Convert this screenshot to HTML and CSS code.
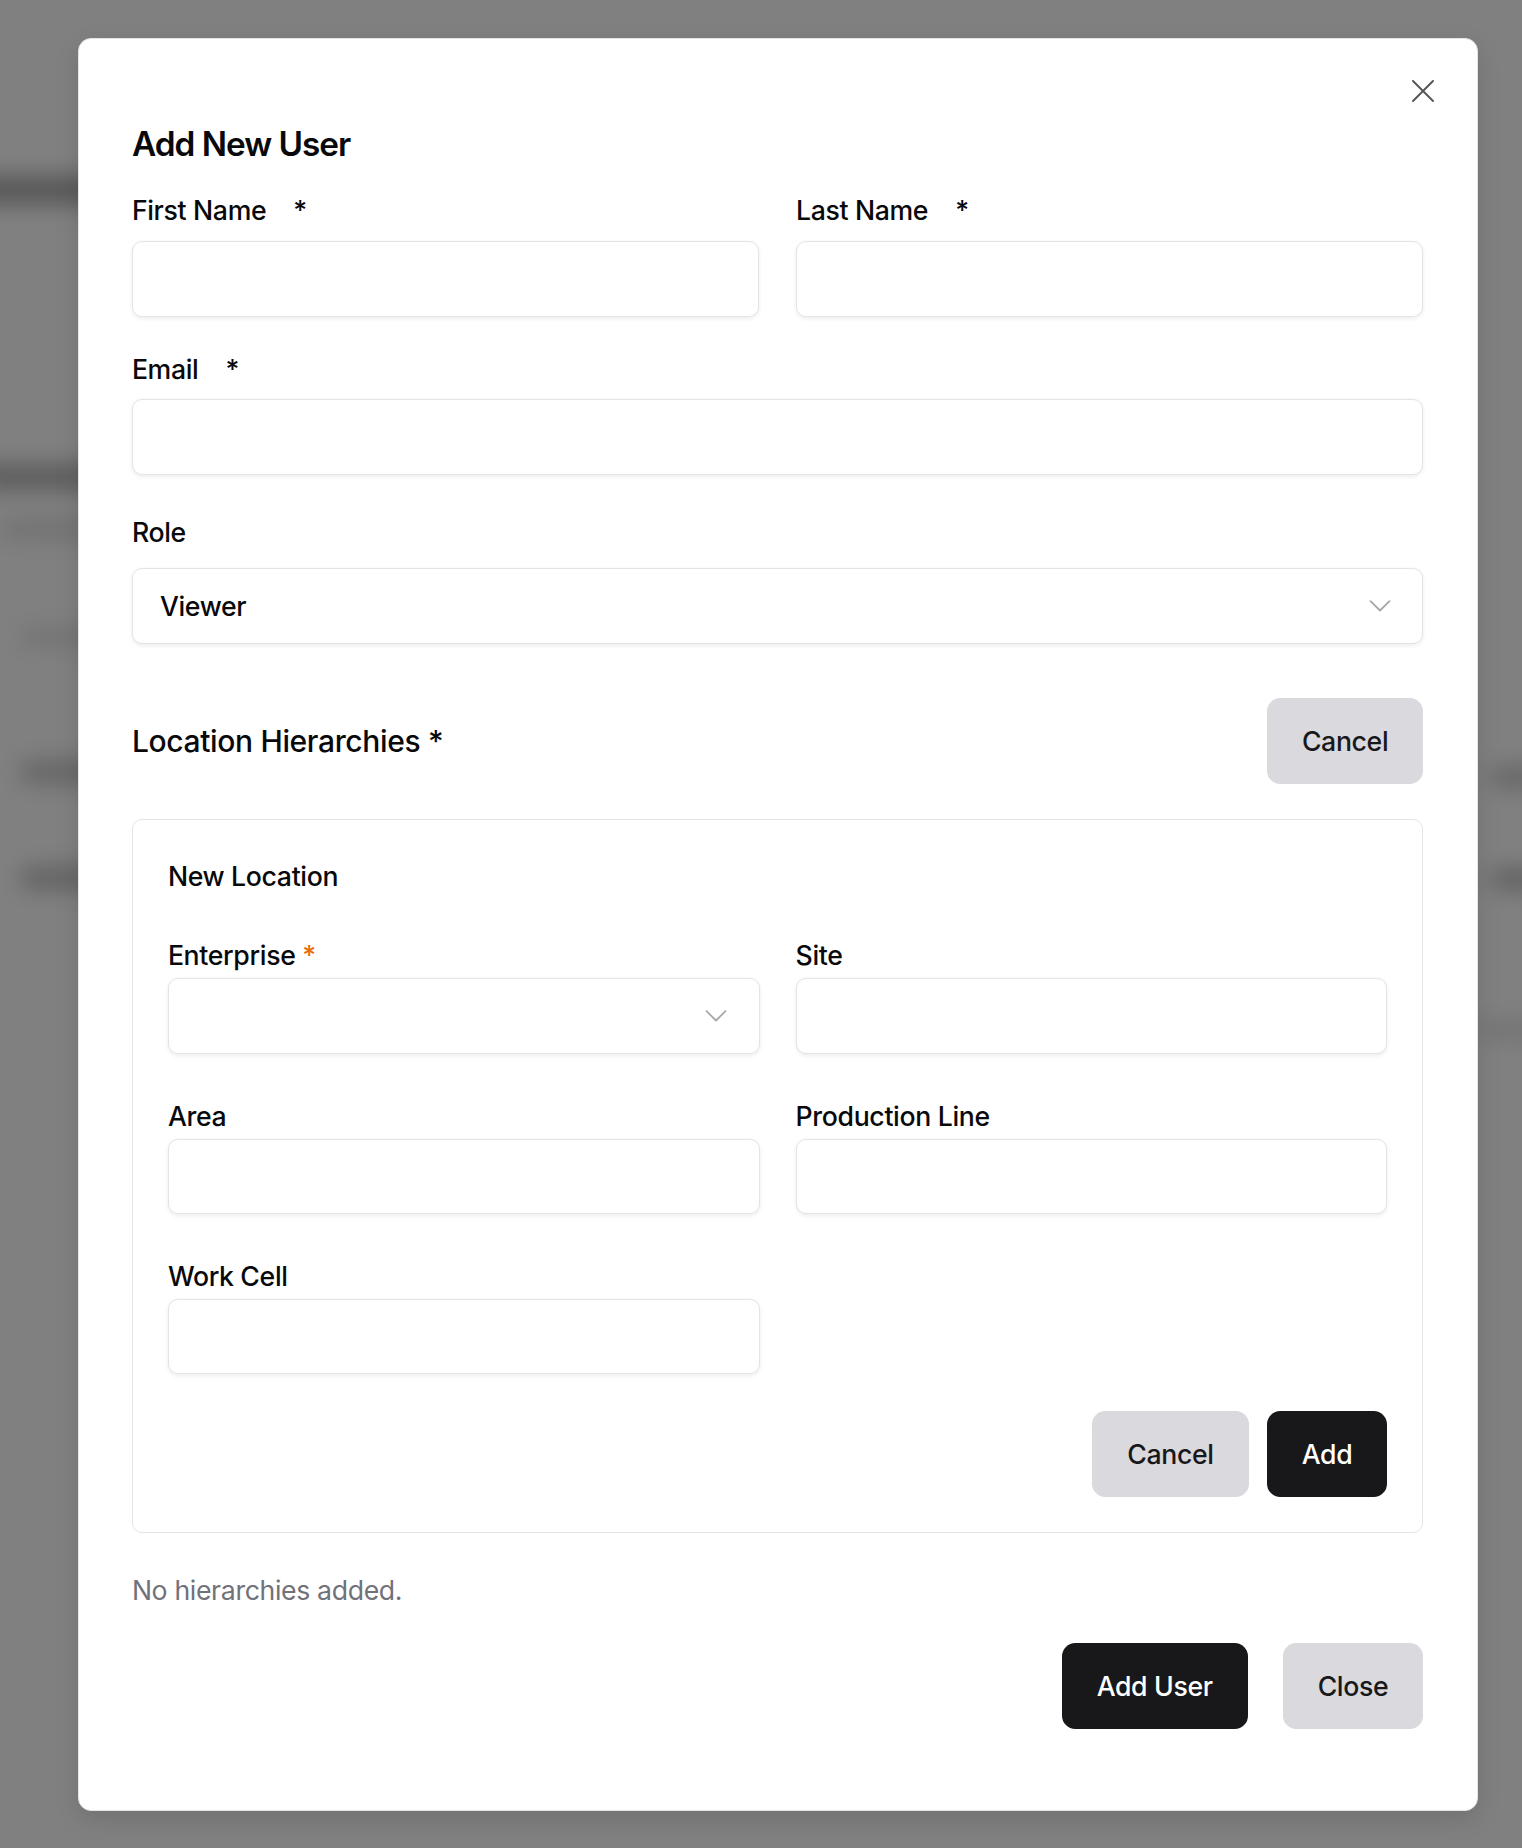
FILE: index.html
```html
<!DOCTYPE html>
<html lang="en">
<head>
<meta charset="utf-8">
<title>Add New User</title>
<link rel="stylesheet" href="styles.css">
</head>
<body>
<div class="backdrop">
  <div class="blob" style="left:-40px;top:176px;width:160px;height:28px;opacity:.32"></div>
  <div class="blob" style="left:-20px;top:464px;width:140px;height:26px;opacity:.28"></div>
  <div class="blob" style="left:0px;top:520px;width:120px;height:18px;opacity:.12"></div>
  <div class="blob" style="left:20px;top:628px;width:100px;height:18px;opacity:.1"></div>
  <div class="blob" style="left:20px;top:760px;width:100px;height:24px;opacity:.2"></div>
  <div class="blob" style="left:20px;top:866px;width:100px;height:24px;opacity:.22"></div>
  <div class="blob" style="left:1490px;top:766px;width:80px;height:22px;opacity:.2"></div>
  <div class="blob" style="left:1490px;top:868px;width:80px;height:22px;opacity:.24"></div>
  <div class="blob" style="left:1480px;top:1022px;width:90px;height:16px;opacity:.12"></div>
</div>
<div class="overlay">
  <div class="modal">
    <button class="close" type="button" aria-label="Close">
      <svg width="22" height="22" viewBox="0 0 22 22" fill="none" stroke="#555558" stroke-width="1.9" stroke-linecap="round"><path d="M1 1L21 21M21 1L1 21"/></svg>
    </button>
    <h2 class="title">Add New User</h2>

    <div class="grid2 row-name">
      <div class="field">
        <label class="label">First Name<span class="req">*</span></label>
        <input class="input" type="text">
      </div>
      <div class="field">
        <label class="label">Last Name<span class="req">*</span></label>
        <input class="input" type="text">
      </div>
    </div>

    <div class="field field-email">
      <label class="label">Email<span class="req">*</span></label>
      <input class="input" type="email">
    </div>

    <div class="field field-role">
      <label class="label label-role">Role</label>
      <div class="select">
        <span class="select-value">Viewer</span>
        <svg class="chev" width="22" height="12" viewBox="0 0 22 12" fill="none" stroke="#a6a6ad" stroke-width="1.8" stroke-linecap="round" stroke-linejoin="round"><path d="M1.5 1.2L11 10.5L20.5 1.2"/></svg>
      </div>
    </div>

    <div class="loc-header">
      <h3 class="loc-heading">Location Hierarchies *</h3>
      <button class="btn btn-light" type="button">Cancel</button>
    </div>

    <div class="loc-box">
      <div class="loc-title">New Location</div>
      <div class="loc-grid">
        <div class="field">
          <label class="label label-tight">Enterprise <span class="req-orange">*</span></label>
          <div class="select">
            <span class="select-value"></span>
            <svg class="chev" width="22" height="12" viewBox="0 0 22 12" fill="none" stroke="#a6a6ad" stroke-width="1.8" stroke-linecap="round" stroke-linejoin="round"><path d="M1.5 1.2L11 10.5L20.5 1.2"/></svg>
          </div>
        </div>
        <div class="field">
          <label class="label label-tight">Site</label>
          <input class="input" type="text">
        </div>
        <div class="field">
          <label class="label label-tight">Area</label>
          <input class="input" type="text">
        </div>
        <div class="field">
          <label class="label label-tight">Production Line</label>
          <input class="input" type="text">
        </div>
        <div class="field">
          <label class="label label-tight">Work Cell</label>
          <input class="input" type="text">
        </div>
      </div>
      <div class="loc-actions">
        <button class="btn btn-light" type="button">Cancel</button>
        <button class="btn btn-dark btn-add" type="button">Add</button>
      </div>
    </div>

    <p class="empty">No hierarchies added.</p>

    <div class="footer">
      <button class="btn btn-dark" type="button">Add User</button>
      <button class="btn btn-light" type="button">Close</button>
    </div>
  </div>
</div>
</body>
</html>
```

FILE: styles.css
```css
* { box-sizing: border-box; }

html, body {
  margin: 0;
  padding: 0;
  width: 1522px;
  height: 1848px;
  overflow: hidden;
}

body {
  font-family: Inter, "Noto Sans", "Liberation Sans", sans-serif;
  color: #09090b;
  background: #808080;
  letter-spacing: -0.35px;
}

.backdrop {
  position: fixed;
  inset: 0;
  background: #808080;
  overflow: hidden;
}

.blob {
  position: absolute;
  background: #000;
  border-radius: 14px;
  filter: blur(11px);
}

.overlay {
  position: fixed;
  inset: 0;
  padding: 37.5px 0 0 77.6px;
}

.modal {
  position: relative;
  width: 1400px;
  background: #ffffff;
  border: 1.67px solid #e4e4e7;
  border-radius: 13px;
  padding: 85.8px 53.3px 81.3px 53.3px;
  box-shadow: 0 8px 24px rgba(0, 0, 0, 0.12);
}

.close {
  position: absolute;
  top: 41.5px;
  right: 42.5px;
  width: 22px;
  height: 22px;
  padding: 0;
  margin: 0;
  border: 0;
  background: transparent;
  display: block;
  cursor: pointer;
}
.close svg { display: block; }

.title {
  margin: 0 0 26px 0;
  font-size: 33.33px;
  line-height: 40px;
  font-weight: 600;
  letter-spacing: -0.03em;
  color: #09090b;
}

.grid2 {
  display: grid;
  grid-template-columns: 1fr 1fr;
  column-gap: 36.7px;
}

.row-name { margin-bottom: 32px; }

.field { display: flex; flex-direction: column; min-width: 0; }

.label {
  display: block;
  font-size: 26.67px;
  line-height: 40px;
  font-weight: 500;
  color: #09090b;
  margin-bottom: 10.7px;
}

.req { margin-left: 27px; }
.req-orange { color: #ea6a0c; }

.label-role { margin-bottom: 16.7px; }
.label-tight { margin-bottom: 3px; }

.input {
  display: block;
  width: 100%;
  height: 75.6px;
  margin: 0;
  padding: 0 27px;
  border: 1.67px solid #e4e4e7;
  border-radius: 10px;
  background: #fff;
  box-shadow: 0 1.67px 4px rgba(0, 0, 0, 0.07);
  font-family: inherit;
  font-size: 26.67px;
  color: #09090b;
  outline: none;
}

.field-email { margin-bottom: 36.7px; }

.select {
  display: flex;
  align-items: center;
  justify-content: space-between;
  height: 75.3px;
  padding: 0 31.5px 0 27px;
  border: 1.67px solid #e4e4e7;
  border-radius: 10px;
  background: #fff;
  box-shadow: 0 1.67px 4px rgba(0, 0, 0, 0.07);
}

.select-value {
  font-size: 26.67px;
  line-height: 40px;
  font-weight: 500;
  color: #09090b;
}

.chev { display: block; flex: none; }

.loc-header {
  display: flex;
  align-items: center;
  justify-content: space-between;
  margin-top: 54.5px;
  margin-bottom: 35.2px;
}

.loc-heading {
  margin: 0;
  font-size: 30px;
  line-height: 40px;
  font-weight: 500;
  color: #09090b;
}

.btn {
  display: inline-flex;
  align-items: center;
  justify-content: center;
  height: 86px;
  padding: 0 35px;
  margin: 0;
  border: 0;
  border-radius: 13.3px;
  font-family: inherit;
  font-size: 26.67px;
  font-weight: 500;
  line-height: 40px;
  letter-spacing: -0.35px;
  cursor: pointer;
}

.btn-light { background: #d9d9de; color: #18181b; }
.btn-dark { background: #18181b; color: #ffffff; }

.loc-box {
  border: 1.67px solid #e4e4e7;
  border-radius: 10px;
  padding: 36.2px 35px 35.6px 35px;
}

.loc-title {
  font-size: 26.67px;
  line-height: 40px;
  font-weight: 500;
  margin-bottom: 39px;
}

.loc-grid {
  display: grid;
  grid-template-columns: 1fr 1fr;
  column-gap: 36px;
  row-gap: 41.7px;
}

.loc-grid .input,
.loc-grid .select { height: 75.5px; }

.loc-actions {
  display: flex;
  justify-content: flex-end;
  gap: 18px;
  margin-top: 36.3px;
}

.empty {
  margin: 37.1px 0 32.7px 0;
  font-size: 26.67px;
  line-height: 40px;
  font-weight: 400;
  color: #71717a;
}

.footer {
  display: flex;
  justify-content: flex-end;
  gap: 35px;
}
```
